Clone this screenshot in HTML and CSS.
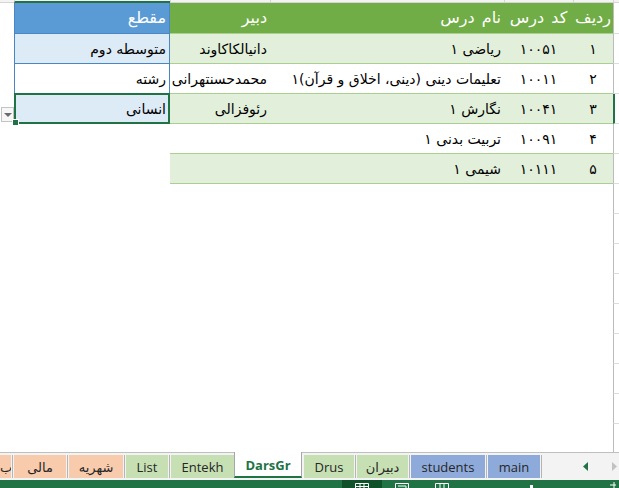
FILE: index.html
```html
<!DOCTYPE html>
<html lang="fa">
<head>
  <meta charset="UTF-8" />
  <title>DarsGr</title>
  <link rel="stylesheet" href="styles.css">
</head>
<body>

  <div class="sheet">
    <!-- column headers (only their bottom edge is visible) -->
    <div class="colheads">
      <span class="ch corner"></span>
      <span class="ch"></span>
      <span class="ch"></span>
      <span class="ch"></span>
      <span class="ch"></span>
      <span class="ch selected"></span>
      <span class="ch rest"></span>
    </div>

    <div class="area">
      <div class="rowheads">
        <span class="rh first"></span>
        <span class="rh"></span>
        <span class="rh"></span>
        <span class="rh selected"></span>
        <span class="rh"></span>
        <span class="rh"></span>
        <span class="rh"></span>
        <span class="rh"></span>
        <span class="rh"></span>
        <span class="rh"></span>
        <span class="rh"></span>
        <span class="rh"></span>
        <span class="rh"></span>
        <span class="rh"></span>
        <span class="rh"></span>
      </div>

      <div class="grid">
        <!-- header -->
        <div class="c head center">ردیف</div>
        <div class="c head center">کد درس</div>
        <div class="c head">نام درس</div>
        <div class="c head">دبیر</div>
        <div class="c head-blue">مقطع</div>
        <div class="c"></div>

        <!-- 1 -->
        <div class="c band center">۱</div>
        <div class="c band center">۱۰۰۵۱</div>
        <div class="c band">ریاضی ۱</div>
        <div class="c band">دانیالکاکاوند</div>
        <div class="c blue band-blue">متوسطه دوم</div>
        <div class="c"></div>

        <!-- 2 -->
        <div class="c row center">۲</div>
        <div class="c row center">۱۰۰۱۱</div>
        <div class="c row">تعلیمات دینی (دینی، اخلاق و قرآن)۱</div>
        <div class="c row">محمدحسنتهرانی</div>
        <div class="c blue">رشته</div>
        <div class="c"></div>

        <!-- 3 -->
        <div class="c band center">۳</div>
        <div class="c band center">۱۰۰۴۱</div>
        <div class="c band">نگارش ۱</div>
        <div class="c band">رئوفزالی</div>
        <div class="c blue band-blue active">انسانی</div>
        <div class="c dd-cell"><span class="dropdown"></span></div>

        <!-- 4 -->
        <div class="c row center">۴</div>
        <div class="c row center">۱۰۰۹۱</div>
        <div class="c row">تربیت بدنی ۱</div>
        <div class="c row"></div>
        <div class="c"></div>
        <div class="c"></div>

        <!-- 5 -->
        <div class="c band center">۵</div>
        <div class="c band center">۱۰۱۱۱</div>
        <div class="c band">شیمی ۱</div>
        <div class="c band"></div>
        <div class="c"></div>
        <div class="c"></div>
      </div>
    </div>
  </div>

  <div class="tabbar">
    <span class="tab peach cut">ب</span>
    <span class="sep"></span>
    <span class="tab peach w-mali">مالی</span>
    <span class="sep"></span>
    <span class="tab peach w-shahrie">شهریه</span>
    <span class="sep"></span>
    <span class="tab green w-list">List</span>
    <span class="sep"></span>
    <span class="tab green w-entekh">Entekh</span>
    <span class="tab current">DarsGr</span>
    <span class="tab green w-drus">Drus</span>
    <span class="sep"></span>
    <span class="tab green w-dabiran">دبیران</span>
    <span class="sep"></span>
    <span class="tab sky w-students">students</span>
    <span class="sep"></span>
    <span class="tab sky w-main">main</span>
    <span class="sep"></span>
    <span class="arrows">
      <svg width="6" height="9" viewBox="0 0 6 9"><path d="M5 0L0 4.5L5 9Z" fill="#217346"/></svg>
      <svg width="6" height="9" viewBox="0 0 6 9"><path d="M0 0L5 4.5L0 9Z" fill="#c2c2c2"/></svg>
    </span>
  </div>

  <div class="statusbar">
    <span class="view on">
      <svg width="14" height="6" viewBox="0 0 14 6"><path d="M0.5 6V0.5H13.5V6M5 0.5V6M9 0.5V6M0.5 3.5H13.5" stroke="#fff" fill="none"/></svg>
    </span>
    <span class="view">
      <svg width="14" height="6" viewBox="0 0 14 6"><path d="M0.5 6V0.5H13.5V6M3 3H11V6" stroke="#fff" fill="none"/></svg>
    </span>
    <span class="view">
      <svg width="14" height="6" viewBox="0 0 14 6"><path d="M0.5 6V0.5H13.5V6M5 0.5V6M9 0.5V6" stroke="#fff" fill="none"/></svg>
    </span>
    <span class="zoom-dot"></span>
    <svg class="plus" width="6" height="8" viewBox="0 0 6 8"><path d="M4 2V8M0 5H6" stroke="#fff" fill="none"/></svg>
  </div>

</body>
</html>
```

FILE: styles.css
```css
body {
  margin: 0;
  width: 619px;
  height: 488px;
  overflow: hidden;
  background: #fff;
  font-family: "DejaVu Sans", "Noto Sans", sans-serif;
}

/* sheet area */
.sheet {
  height: 452px;
  overflow: hidden;
}
.colheads {
  display: flex;
  direction: rtl;
  height: 3px;
  background: #f3f3f3;
}
.ch {
  box-sizing: border-box;
  width: 40px;
  height: 3px;
  border-left: 1px solid #d4d4d4;
  border-bottom: 1px solid #d4d4d4;
}
.ch:nth-child(3) { width: 69px; }
.ch:nth-child(4) { width: 234px; }
.ch:nth-child(5) { width: 100px; }
.ch.corner { width: 6px; }
.ch.selected {
  width: 156px;
  border-bottom: 2px solid #217346;
}
.ch.rest {
  flex: 1;
  border-left: none;
}

.area {
  display: flex;
  direction: rtl;
}
.rowheads {
  display: flex;
  flex-direction: column;
  width: 6px;
}
.rh {
  box-sizing: border-box;
  height: 30px;
  flex: none;
  border-left: 1px solid #bcbcbc;
  border-bottom: 1px solid #dcdcdc;
}
.rh.first { height: 31px; }
.rh.selected { border-left: 2px solid #217346; }

.grid {
  flex: 1;
  display: grid;
  direction: rtl;
  grid-template-columns: 40px 69px 234px 100px 156px 1fr;
  grid-template-rows: 31px;
  grid-auto-rows: 30px;
}
.c {
  box-sizing: border-box;
  display: flex;
  align-items: flex-end;
  padding: 0 3px 5px;
  white-space: nowrap;
  overflow: hidden;
  font-size: 14px;
  line-height: 18px;
  color: #000;
}
.c.center { justify-content: center; }

.head {
  background: #70ad47;
  color: #fff;
  font-size: 16px;
  word-spacing: 2px;
  padding-bottom: 6px;
  border-bottom: 1px solid #a9d08e;
}
.head-blue {
  background: #5b9bd5;
  color: #fff;
  font-size: 16px;
  padding-bottom: 6px;
  border-left: 1px solid #4a86c5;
  border-right: 1px solid #4a86c5;
  border-bottom: 1px solid #4a86c5;
}
.band {
  background: #e2efda;
  border-bottom: 1px solid #a9d08e;
}
.row { border-bottom: 1px solid #a9d08e; }
.blue {
  border-left: 1px solid #4a86c5;
  border-right: 1px solid #4a86c5;
  border-bottom: 1px solid #4a86c5;
}
.band-blue { background: #ddebf7; }

.active { overflow: visible; position: relative; }
.active::after {
  content: "";
  position: absolute;
  top: -1px;
  bottom: -1px;
  left: -1px;
  right: -1px;
  border: 2px solid #217346;
}
.active::before {
  content: "";
  position: absolute;
  left: -3px;
  bottom: -3px;
  width: 5px;
  height: 5px;
  background: #217346;
  border: 1px solid #fff;
  z-index: 1;
}

.dd-cell { padding: 0 0 2px; }
.dropdown {
  box-sizing: border-box;
  display: block;
  width: 13px;
  height: 15px;
  background: #f7f7f7;
  border: 1px solid #c3c3c3;
  position: relative;
}
.dropdown::after {
  content: "";
  position: absolute;
  left: 2px;
  top: 5px;
  border-left: 4px solid transparent;
  border-right: 4px solid transparent;
  border-top: 4px solid #6b6b6b;
}

/* sheet tabs */
.tabbar {
  box-sizing: border-box;
  height: 28px;
  border-top: 1px solid #bfbfbf;
  background: #f3f3f3;
  display: flex;
  align-items: flex-start;
  font-family: "Open Sans", "DejaVu Sans", sans-serif;
  font-size: 13px;
  color: #262626;
}
.tab {
  box-sizing: border-box;
  height: 23px;
  margin-top: 2px;
  display: flex;
  align-items: center;
  justify-content: center;
  white-space: nowrap;
  overflow: hidden;
}
.sep {
  width: 1px;
  height: 23px;
  margin: 2px 1px 0;
  background: #b5b5b5;
}
.peach { background: #f8cbad; }
.green { background: #c6e0b4; }
.sky { background: #8eaadb; }
.cut { width: 11px; justify-content: flex-start; }
.w-mali { width: 52px; }
.w-shahrie { width: 54px; }
.w-list { width: 42px; }
.w-entekh { width: 63px; }
.w-drus { width: 50px; margin-left: 2px; }
.w-dabiran { width: 51px; }
.w-students { width: 74px; }
.w-main { width: 52px; }
.tab.current {
  width: 68px;
  height: 26px;
  margin-top: -1px;
  background: #fff;
  border-left: 1px solid #a6a6a6;
  border-right: 1px solid #a6a6a6;
  border-bottom: 2px solid #217346;
  color: #217346;
  font-weight: bold;
  padding-top: 1px;
}
.arrows {
  display: flex;
  gap: 23px;
  margin-left: 40px;
  margin-top: 9px;
}

/* status bar */
.statusbar {
  height: 8px;
  background: #217346;
  display: flex;
  align-items: flex-start;
  overflow: hidden;
}
.view {
  display: flex;
  justify-content: center;
  width: 40px;
  height: 8px;
  padding-top: 3px;
  box-sizing: border-box;
}
.view.on {
  margin-left: 342px;
  background: #0f5129;
}
.zoom-dot {
  width: 3px;
  height: 3px;
  margin: 5px 0 0 68px;
  background: #fff;
}
.plus {
  margin-left: 77px;
}
```
